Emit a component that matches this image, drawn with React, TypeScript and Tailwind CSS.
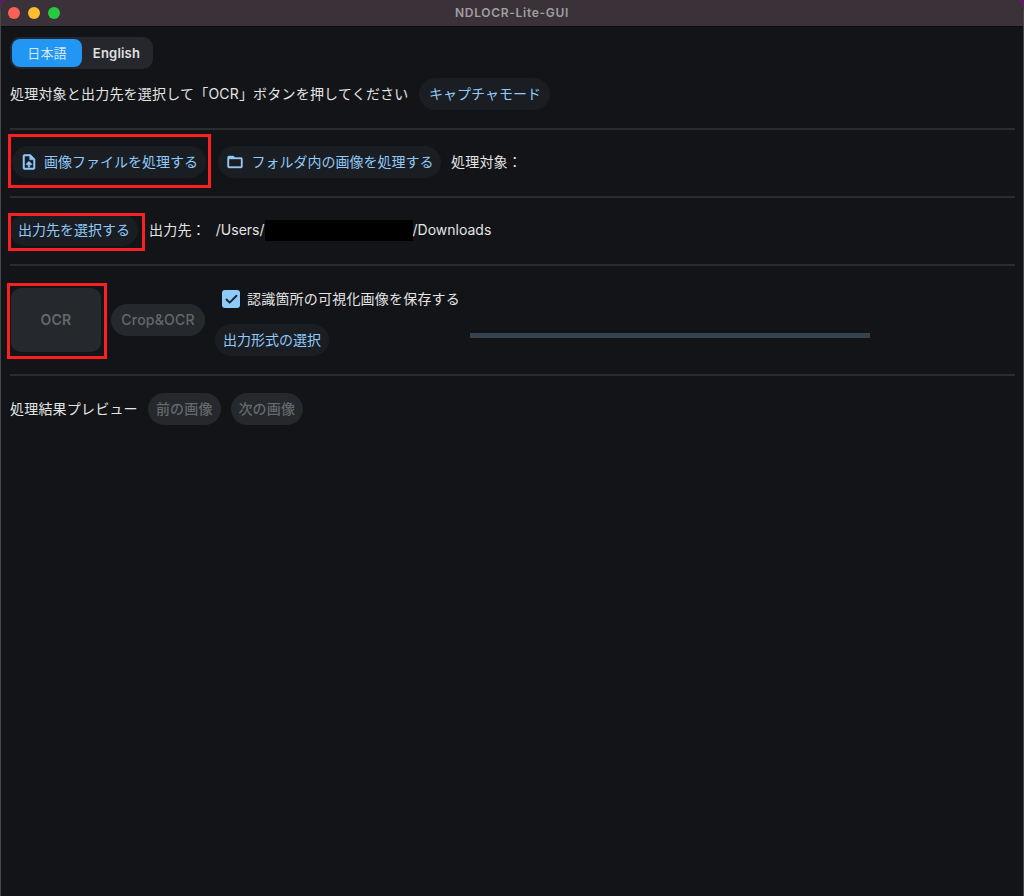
import React from 'react';
import { Check } from 'lucide-react';

const font = 'font-["Inter","Noto_Sans_CJK_JP",sans-serif]';

function Pill({ children, className = '' }: { children: React.ReactNode; className?: string }) {
  return (
    <div className={`flex h-8 items-center justify-center rounded-2xl bg-[#1a1d22] text-sm text-[#90caf9] ${className}`}>
      {children}
    </div>
  );
}

function Disabled({ children, className = '' }: { children: React.ReactNode; className?: string }) {
  return (
    <div className={`flex h-8 items-center justify-center rounded-2xl bg-[#25282c] text-sm font-medium tracking-[0.2px] text-[#66686b] ${className}`}>
      {children}
    </div>
  );
}

// red annotation drawn over the screenshot
function RedBox({ className }: { className: string }) {
  return <div className={`pointer-events-none absolute border-[3px] border-[#fb1f1f] ${className}`} />;
}

function Divider() {
  return <div className="h-0.5 w-full bg-[#2a2c30]" />;
}

function UploadFileIcon() {
  return (
    <svg viewBox="0 0 24 24" className="h-[18px] w-[18px]" fill="currentColor" stroke="currentColor" strokeWidth="0.7">
      <path d="M14 2H6c-1.1 0-1.99.9-1.99 2L4 20c0 1.1.89 2 1.99 2H18c1.1 0 2-.9 2-2V8l-6-6zm4 18H6V4h7v5h5v11zM8 15.01l1.41 1.41L11 14.84V19h2v-4.16l1.59 1.59L16 15.01 12.01 11 8 15.01z" />
    </svg>
  );
}

function FolderIcon() {
  return (
    <svg viewBox="0 0 24 24" className="h-[18px] w-[18px]" fill="currentColor" stroke="currentColor" strokeWidth="0.5">
      <path d="M20 6h-8l-2-2H4c-1.1 0-1.99.9-1.99 2L2 18c0 1.1.9 2 2 2h16c1.1 0 2-.9 2-2V8c0-1.1-.9-2-2-2zm0 12H4V8h16v10z" />
    </svg>
  );
}

export default function App() {
  return (
    <div className={`h-[896px] w-[1024px] overflow-hidden bg-[#5a1f60] text-sm tracking-[0.2px] text-[#e4e4e4] ${font}`}>
      <div className="flex h-full flex-col overflow-hidden rounded-t-[10px] border-x border-[#47474a] bg-[#131418]">
        {/* title bar */}
        <div className="relative flex h-[27px] shrink-0 items-center border-b border-[#0c0c0e] bg-[#3a3238] pl-[7px]">
          <div className="flex gap-2">
            <div className="h-3 w-3 rounded-full bg-[#fe5f57]" />
            <div className="h-3 w-3 rounded-full bg-[#febc2e]" />
            <div className="h-3 w-3 rounded-full bg-[#28c840]" />
          </div>
          <div className="absolute inset-x-0 text-center text-xs font-semibold tracking-[0.7px] text-[#a29ea1]">NDLOCR-Lite-GUI</div>
        </div>

        <div className="flex flex-col pl-[9px] pr-[8px]">
          {/* language toggle */}
          <div className="mt-[10px] flex h-8 w-[143px] items-center rounded-[10px] bg-[#25272c] p-0.5 text-[13px] font-semibold">
            <div className="flex h-7 w-[70px] items-center justify-center rounded-lg bg-[#2196f3] font-normal text-[#d8e6f2]">日本語</div>
            <div className="flex h-7 flex-1 items-center justify-center text-[#e0e0e0]">English</div>
          </div>

          <div className="mt-[9px] flex h-8 items-center">
            <span>処理対象と出力先を選択して「OCR」ボタンを押してください</span>
            <Pill className="ml-[11px] w-[131px] tracking-normal">キャプチャモード</Pill>
          </div>

          <div className="mt-[18px]"><Divider /></div>

          {/* input row */}
          <div className="mt-4 flex h-8 items-center">
            <div className="relative ml-0.5">
              <Pill className="w-[194px] gap-[6px] tracking-normal">
                <UploadFileIcon />
                画像ファイルを処理する
              </Pill>
              <RedBox className="-left-[4px] -top-3 h-[54px] w-[203px]" />
            </div>
            <Pill className="ml-3 w-[223px] gap-2 tracking-normal">
              <FolderIcon />
              フォルダ内の画像を処理する
            </Pill>
            <span className="ml-[10px]">処理対象：</span>
          </div>

          <div className="mt-[18px]"><Divider /></div>

          {/* output row */}
          <div className="mt-4 flex h-8 items-center">
            <div className="relative">
              <Pill className="w-[128px] tracking-normal">出力先を選択する</Pill>
              <RedBox className="-left-[2px] -top-[1px] h-[38px] w-[137px]" />
            </div>
            <span className="ml-[11px]">出力先：</span>
            <span className="ml-[10px] tracking-normal">/Users/</span>
            <div className="h-[21px] w-[148px] bg-black" />
            <span className="tracking-normal">/Downloads</span>
          </div>

          <div className="mt-[18px]"><Divider /></div>

          {/* OCR row */}
          <div className="mt-[21px] flex h-[70px] items-start">
            <div className="relative ml-px mt-px">
              <div className="flex h-16 w-[90px] items-center justify-center rounded-[10px] bg-[#25282c] text-sm font-semibold text-[#66686b]">OCR</div>
              <RedBox className="-left-[4px] -top-[5px] h-[76px] w-[100px]" />
            </div>
            <Disabled className="ml-2.5 mt-[17px] w-[94px]">Crop&amp;OCR</Disabled>
            <div className="ml-2.5 flex w-[256px] flex-col items-start">
              <div className="ml-[7px] flex h-6 items-center gap-[7px]">
                <div className="flex h-[18px] w-[18px] items-center justify-center rounded-[3px] bg-[#90caf9]">
                  <Check size={15} strokeWidth={3} className="text-[#10263a]" />
                </div>
                <span>認識箇所の可視化画像を保存する</span>
              </div>
              <Pill className="mt-[13px] w-[114px] tracking-normal">出力形式の選択</Pill>
            </div>
            <div className="ml-[-1px] mt-[46px] h-[5px] w-[400px] bg-[#36434f]" />
          </div>

          <div className="mt-[17px]"><Divider /></div>

          {/* preview row */}
          <div className="mt-[17px] flex h-8 items-center">
            <span>処理結果プレビュー</span>
            <Disabled className="ml-[10px] w-[73px]">前の画像</Disabled>
            <Disabled className="ml-[10px] w-[72px]">次の画像</Disabled>
          </div>
        </div>
      </div>
    </div>
  );
}
